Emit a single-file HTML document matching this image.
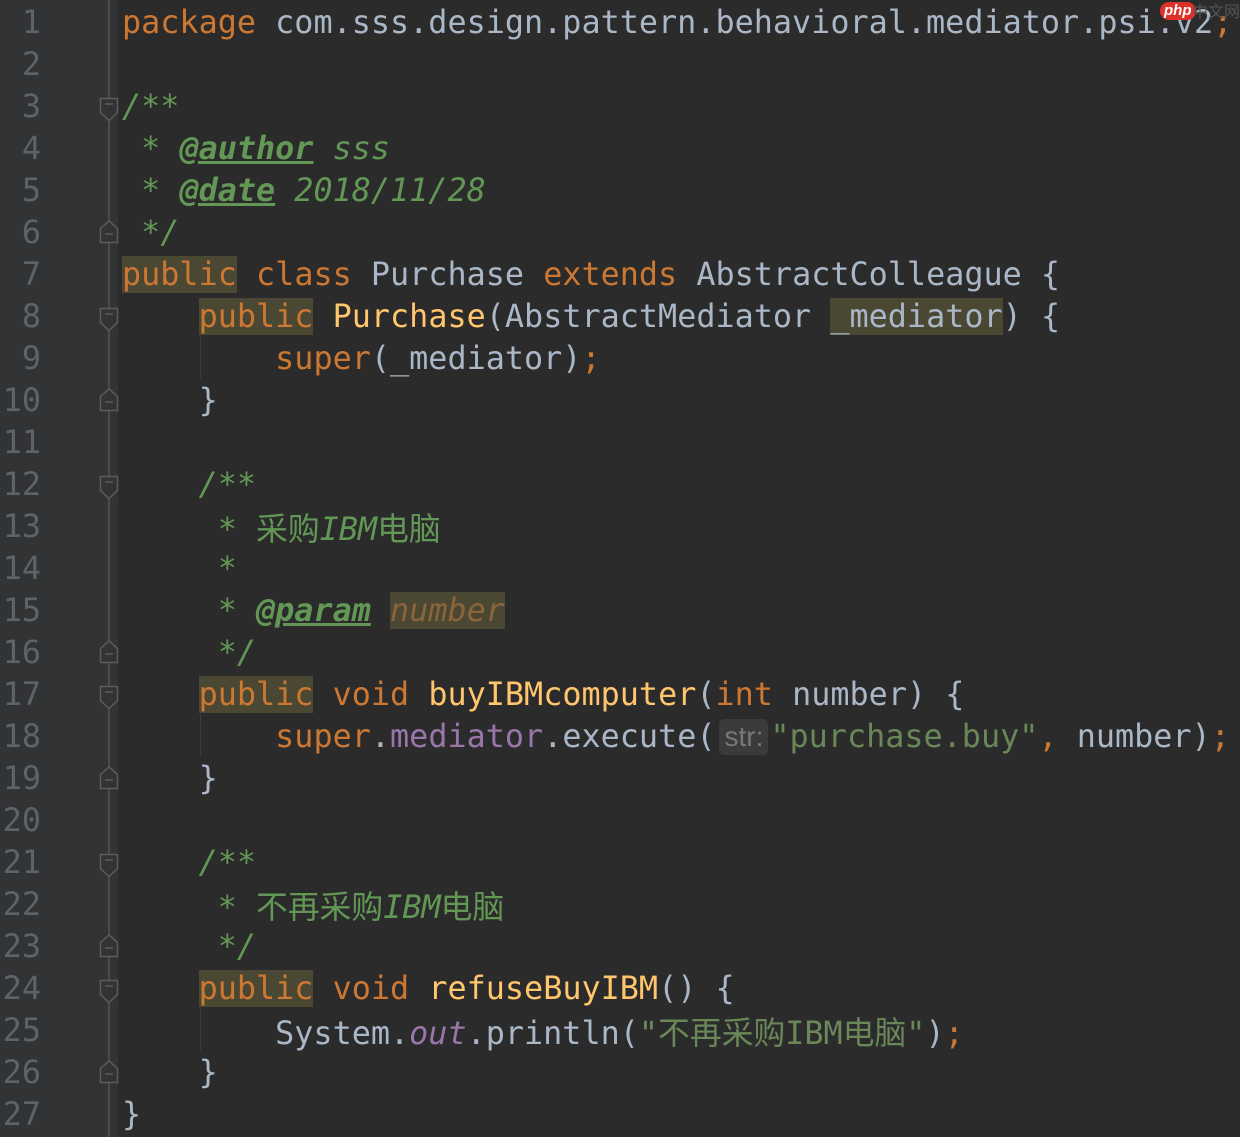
<!DOCTYPE html>
<html><head><meta charset="utf-8"><style>
body{margin:0;width:1240px;height:1137px;background:#2b2b2b;overflow:hidden;position:relative}
.g{position:absolute;left:0;top:0;width:118px;height:1137px;background:#313335}
.gl{position:absolute;left:108px;top:0;width:2px;height:1137px;background:#4a4c4e}
.ln{position:absolute;left:0;width:41px;text-align:right;font:31.8px/42px "DejaVu Sans Mono",monospace;color:#606366;margin-top:2px}
.l{position:absolute;left:122px;white-space:pre;font:31.8px/42px "DejaVu Sans Mono","Noto Sans CJK SC",monospace;color:#a9b7c6;margin-top:2px}
.k{color:#cc7832}.f{color:#ffc66d}.s{color:#6a8759}.p{color:#9876aa;font-style:italic}
.c{color:#629755;font-style:italic}.t{color:#629755;font-style:italic;font-weight:bold;text-decoration:underline}
.cj{font-family:"Noto Sans CJK SC",sans-serif;font-style:normal}
.h{background:#4a4733}.pn{color:#8a653b;font-style:italic}
.hint{display:inline-block;background:#3b3b3b;color:#787878;font:28px/36px "Liberation Sans",sans-serif;border-radius:5px;padding:0 5px;margin:0 2px 0 4px;vertical-align:1px}
.ig{position:absolute;left:200px;width:1px;background:#3c3c3c}
</style></head><body>
<div class="g"></div><div class="gl"></div>
<div class="ig" style="top:336px;height:42px"></div>
<div class="ig" style="top:714px;height:42px"></div>
<div class="ig" style="top:1008px;height:42px"></div>
<svg width="1240" height="1137" style="position:absolute;left:0;top:0" fill="#313335" stroke="#5a5c5e" stroke-width="1.5">
<g id="o"><path d="M100.5 98.5h17v14l-8.5 8-8.5-8z"/><path d="M105 104h8"/></g>
<use href="#o" y="210"/><use href="#o" y="378"/><use href="#o" y="588"/><use href="#o" y="756"/><use href="#o" y="882"/>
<g id="x"><path d="M100.5 242.5h17v-14l-8.5-7.5-8.5 7.5z"/><path d="M105 234h8"/></g>
<use href="#x" y="168"/><use href="#x" y="420"/><use href="#x" y="546"/><use href="#x" y="714"/><use href="#x" y="840"/>
</svg>
<div class="ln" style="top:0">1</div><div class="ln" style="top:42px">2</div><div class="ln" style="top:84px">3</div><div class="ln" style="top:126px">4</div><div class="ln" style="top:168px">5</div><div class="ln" style="top:210px">6</div><div class="ln" style="top:252px">7</div><div class="ln" style="top:294px">8</div><div class="ln" style="top:336px">9</div><div class="ln" style="top:378px">10</div><div class="ln" style="top:420px">11</div><div class="ln" style="top:462px">12</div><div class="ln" style="top:504px">13</div><div class="ln" style="top:546px">14</div><div class="ln" style="top:588px">15</div><div class="ln" style="top:630px">16</div><div class="ln" style="top:672px">17</div><div class="ln" style="top:714px">18</div><div class="ln" style="top:756px">19</div><div class="ln" style="top:798px">20</div><div class="ln" style="top:840px">21</div><div class="ln" style="top:882px">22</div><div class="ln" style="top:924px">23</div><div class="ln" style="top:966px">24</div><div class="ln" style="top:1008px">25</div><div class="ln" style="top:1050px">26</div><div class="ln" style="top:1092px">27</div>

<div class="l" style="top:0"><span class="k">package</span> com.sss.design.pattern.behavioral.mediator.psi.v2<span class="k">;</span></div>
<div class="l c" style="top:84px">/**</div>
<div class="l c" style="top:126px"> * <span class="t">@author</span> sss</div>
<div class="l c" style="top:168px"> * <span class="t">@date</span> 2018/11/28</div>
<div class="l c" style="top:210px"> */</div>
<div class="l" style="top:252px"><span class="k h">public</span> <span class="k">class</span> Purchase <span class="k">extends</span> AbstractColleague {</div>
<div class="l" style="top:294px">    <span class="k h">public</span> <span class="f">Purchase</span>(AbstractMediator <span class="h">_mediator</span>) {</div>
<div class="l" style="top:336px">        <span class="k">super</span>(_mediator)<span class="k">;</span></div>
<div class="l" style="top:378px">    }</div>
<div class="l c" style="top:462px">    /**</div>
<div class="l c" style="top:504px">     * <span class="cj">采购</span>IBM<span class="cj">电脑</span></div>
<div class="l c" style="top:546px">     *</div>
<div class="l c" style="top:588px">     * <span class="t">@param</span> <span class="pn h">number</span></div>
<div class="l c" style="top:630px">     */</div>
<div class="l" style="top:672px">    <span class="k h">public</span> <span class="k">void</span> <span class="f">buyIBMcomputer</span>(<span class="k">int</span> number) {</div>
<div class="l" style="top:714px">        <span class="k">super</span>.<span class="p" style="font-style:normal">mediator</span>.execute(<span class="hint">str:</span><span class="s">"purchase.buy"</span><span class="k">,</span> number)<span class="k">;</span></div>
<div class="l" style="top:756px">    }</div>
<div class="l c" style="top:840px">    /**</div>
<div class="l c" style="top:882px">     * <span class="cj">不再采购</span>IBM<span class="cj">电脑</span></div>
<div class="l c" style="top:924px">     */</div>
<div class="l" style="top:966px">    <span class="k h">public</span> <span class="k">void</span> <span class="f">refuseBuyIBM</span>() {</div>
<div class="l" style="top:1008px">        System.<span class="p">out</span>.println(<span class="s">"<span class="cj">不再采购</span>IBM<span class="cj">电脑</span>"</span>)<span class="k">;</span></div>
<div class="l" style="top:1050px">    }</div>
<div class="l" style="top:1092px">}</div>
<div style="position:absolute;left:1160px;top:2px;font:bold italic 15px/18px 'Liberation Sans',sans-serif;color:#fff;background:#e0302a;border-radius:9px;padding:0 4px">php</div>
<div style="position:absolute;left:1192px;top:0;font:16px/20px 'Noto Sans CJK SC',sans-serif;color:#555">中文网</div>
</body></html>
